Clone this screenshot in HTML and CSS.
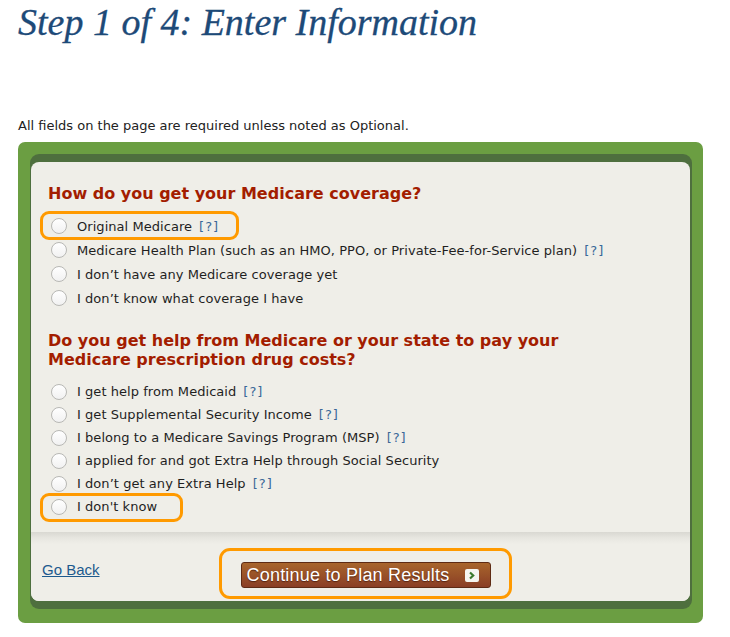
FILE: index.html
```html
<!doctype html>
<html lang="en">
  <head>
    <meta charset="UTF-8" />
    <title>Step 1 of 4: Enter Information</title>
    <link rel="stylesheet" href="styles.css">
  </head>
  <body>
    <main class="page">
      <h1 class="page-title">Step 1 of 4: Enter Information</h1>
      <p class="required-note">All fields on the page are required unless noted as Optional.</p>

      <section class="wizard-box">
        <div class="wizard-frame">
          <form class="wizard-panel">
            <div class="question-area">
              <h2 class="question-title">How do you get your Medicare coverage?</h2>
              <div class="option-list option-list--wide">
                <label class="option marked marked--first">
                  <input type="radio" name="coverage" class="option-radio" />
                  <span>Original Medicare</span>
                  <a href="#" class="help-link">[?]</a>
                </label>
                <label class="option">
                  <input type="radio" name="coverage" class="option-radio" />
                  <span>Medicare Health Plan (such as an HMO, PPO, or Private-Fee-for-Service plan)</span>
                  <a href="#" class="help-link">[?]</a>
                </label>
                <label class="option">
                  <input type="radio" name="coverage" class="option-radio" />
                  <span>I don’t have any Medicare coverage yet</span>
                </label>
                <label class="option">
                  <input type="radio" name="coverage" class="option-radio" />
                  <span>I don’t know what coverage I have</span>
                </label>
              </div>

              <h2 class="question-title question-title--second">Do you get help from Medicare or your state to pay your Medicare prescription drug costs?</h2>
              <div class="option-list option-list--second">
                <label class="option">
                  <input type="radio" name="help" class="option-radio" />
                  <span>I get help from Medicaid</span>
                  <a href="#" class="help-link">[?]</a>
                </label>
                <label class="option">
                  <input type="radio" name="help" class="option-radio" />
                  <span>I get Supplemental Security Income</span>
                  <a href="#" class="help-link">[?]</a>
                </label>
                <label class="option">
                  <input type="radio" name="help" class="option-radio" />
                  <span>I belong to a Medicare Savings Program (MSP)</span>
                  <a href="#" class="help-link">[?]</a>
                </label>
                <label class="option">
                  <input type="radio" name="help" class="option-radio" />
                  <span>I applied for and got Extra Help through Social Security</span>
                </label>
                <label class="option">
                  <input type="radio" name="help" class="option-radio" />
                  <span>I don’t get any Extra Help</span>
                  <a href="#" class="help-link">[?]</a>
                </label>
                <label class="option marked marked--last">
                  <input type="radio" name="help" class="option-radio" />
                  <span>I don't know</span>
                </label>
              </div>
            </div>

            <div class="wizard-footer">
              <a href="#" class="back-link">Go Back</a>
              <button type="submit" class="continue-button marked marked--button">
                <span>Continue to Plan Results</span>
                <span class="continue-icon">
                  <svg width="8" height="9" viewBox="0 0 8 9" aria-hidden="true">
                    <path d="M2 1.5 L5.2 4.5 L2 7.5" fill="none" stroke="#3c7a2c" stroke-width="2.2" />
                  </svg>
                </span>
              </button>
            </div>
          </form>
        </div>
      </section>
    </main>
  </body>
</html>
```

FILE: styles.css
```css
* {
  margin: 0;
  padding: 0;
  box-sizing: border-box;
}

body {
  background: #fff;
  font-family: "DejaVu Sans", Verdana, sans-serif;
  color: #222;
}

.page {
  padding: 2px 27px 0 18px;
}

.page-title {
  font-family: "Liberation Serif", Georgia, serif;
  font-style: italic;
  font-weight: normal;
  font-size: 38px;
  line-height: 40px;
  color: #1d4a78;
  -webkit-text-stroke: 0.3px #1d4a78;
}

.required-note {
  margin-top: 76px;
  font-size: 13px;
  line-height: 16px;
  color: #222;
}

.wizard-box {
  margin-top: 8px;
  background: #6b9e42;
  border-radius: 7px;
  padding: 12px 11px 14px 12px;
}

.wizard-frame {
  background: #4e6f3e;
  border-radius: 9px;
  padding: 8px 2px 8px 1px;
}

.wizard-panel {
  background: #efeee8;
  border-radius: 8px;
}

.question-area {
  padding: 22px 17px 14px 17px;
}

.question-title {
  font-size: 16px;
  line-height: 20px;
  font-weight: bold;
  color: #a31d00;
}

.question-title--second {
  margin-top: 21px;
  max-width: 540px;
  line-height: 19px;
}

.option-list {
  margin-top: 10px;
  padding-left: 3px;
  display: flex;
  flex-direction: column;
}

.option-list--second {
  margin-top: 11px;
}

.option {
  position: relative;
  display: flex;
  align-items: center;
  width: fit-content;
  height: 23px;
  font-size: 13px;
  letter-spacing: 0.05px;
  color: #1f1f1f;
  cursor: pointer;
}

.option-list--wide .option {
  height: 24px;
}

.option-radio {
  appearance: none;
  width: 16px;
  height: 16px;
  border-radius: 50%;
  border: 1px solid #b8b8b5;
  background: linear-gradient(180deg, #ffffff 0%, #f1f1f1 100%);
  margin-right: 10px;
  flex-shrink: 0;
}

.help-link {
  margin-left: 7px;
  color: #3a6898;
  text-decoration: none;
  letter-spacing: 1px;
}

/* orange highlight annotations */
.marked::after {
  content: "";
  position: absolute;
  border: 3px solid #ff9a00;
  border-radius: 9px;
  pointer-events: none;
}

.marked--first::after {
  top: -3px;
  bottom: -2px;
  left: -11px;
  right: -20px;
}

.marked--last::after {
  top: -2px;
  bottom: -4px;
  left: -11px;
  right: -26px;
}

.marked--button::after {
  top: -15px;
  bottom: -12px;
  left: -23px;
  right: -22px;
  border-radius: 11px;
}

.wizard-footer {
  display: flex;
  align-items: flex-start;
  padding: 30px 0 13px 11px;
  background: linear-gradient(180deg, #d9d8d2 0px, #e7e6e0 6px, #efeee8 12px);
  border-radius: 0 0 8px 8px;
}

.back-link {
  margin-top: -1px;
  font-family: "Liberation Sans", Arial, sans-serif;
  font-size: 15px;
  line-height: 18px;
  color: #1d5a8e;
}

.continue-button {
  position: relative;
  margin-left: 141px;
  width: 250px;
  height: 26px;
  display: flex;
  align-items: center;
  justify-content: space-between;
  padding: 0 11px 0 5px;
  background: linear-gradient(180deg, #a8652c 0%, #8a3e25 100%);
  border: 1px solid #5e2b14;
  border-radius: 3px;
  color: #fff;
  font-family: "Liberation Sans", Arial, sans-serif;
  font-size: 18px;
  letter-spacing: 0.2px;
  text-shadow: 0 1px 1px rgba(60, 20, 5, 0.7);
  cursor: pointer;
}

.continue-icon {
  display: flex;
  align-items: center;
  justify-content: center;
  width: 14px;
  height: 13px;
  background: #f6f6f0;
  border-radius: 2px;
}
```
